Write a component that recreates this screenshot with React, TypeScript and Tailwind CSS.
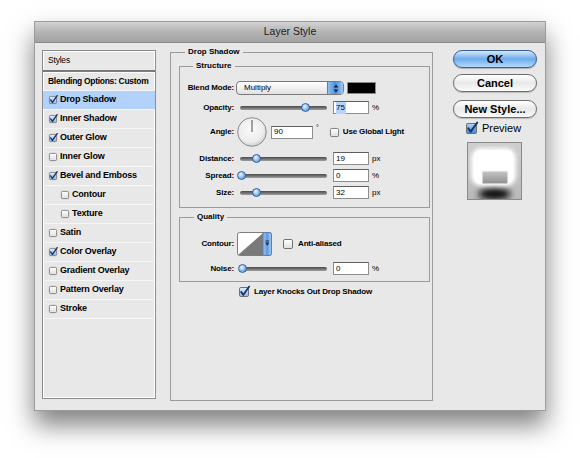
import { useId } from 'react'

const STYLES = [
  { label: 'Drop Shadow',      on: true,  active: true },
  { label: 'Inner Shadow',     on: true },
  { label: 'Outer Glow',       on: true },
  { label: 'Inner Glow',       on: false },
  { label: 'Bevel and Emboss', on: true },
  { label: 'Contour',          on: false, sub: true },
  { label: 'Texture',          on: false, sub: true },
  { label: 'Satin',            on: false },
  { label: 'Color Overlay',    on: true },
  { label: 'Gradient Overlay', on: false },
  { label: 'Pattern Overlay',  on: false },
  { label: 'Stroke',           on: false },
]

function Check({ on, size = 8, tone = 'light' }: { on: boolean; size?: number; tone?: 'light' | 'blue' }) {
  const id = 'cb' + useId().replace(/:/g, '')
  const top = on ? (tone === 'blue' ? '#b9d6f6' : '#e2edf9') : '#ffffff'
  const bottom = on ? (tone === 'blue' ? '#3f86dc' : '#93b7e2') : '#dedede'
  return (
    <svg width={size} height={size} viewBox="0 0 10 10" className="shrink-0 overflow-visible">
      <defs>
        <linearGradient id={id} x1="0" y1="0" x2="0" y2="1">
          <stop offset="0" stopColor={top} />
          <stop offset="1" stopColor={bottom} />
        </linearGradient>
      </defs>
      <rect x="0.5" y="0.5" width="9" height="9" rx="1.3" fill={`url(#${id})`} stroke="#707070" />
      {on && (
        <path d="M2.1 4.9 L4.3 7.9 L10.2 -0.4" fill="none" stroke="#15356e" strokeWidth="1.8" strokeLinecap="round" strokeLinejoin="round" />
      )}
    </svg>
  )
}

function Slider({ pos }: { pos: number }) {
  return (
    <div className="relative w-[87px] h-[10px] flex items-center shrink-0">
      <div className="w-full h-[4px] rounded-full bg-linear-to-b from-[#4a4a4a] to-[#a0a0a0]" />
      <div
        className="absolute top-[0.5px] size-[9px] rounded-full border border-[#36629f] bg-radial-[at_40%_35%] from-[#eef6ff] via-[#8dbdf0] to-[#3f7fcf]"
        style={{ left: pos - 4.5 }}
      />
    </div>
  )
}

function Field({ children, wide }: { children: React.ReactNode; wide?: boolean }) {
  return (
    <div className={`h-[13px] shrink-0 bg-white border border-[#8d8d8d] border-t-[#5f5f5f] flex items-center pl-[2px] text-[8px] ${wide ? 'w-[42px]' : 'w-[36px]'}`}>
      {children}
    </div>
  )
}

function Label({ children }: { children: React.ReactNode }) {
  return <div className="w-[54px] shrink-0 text-right font-bold tracking-[-0.15px]">{children}</div>
}

function SliderRow({ label, pos, value, unit }: { label: string; pos: number; value: string; unit: string }) {
  return (
    <div className="flex items-center h-[13px]">
      <Label>{label}</Label>
      <div className="ml-[6px]"><Slider pos={pos} /></div>
      <div className="ml-[6px]"><Field>{value}</Field></div>
      <span className="ml-[3px] text-[8px]">{unit}</span>
    </div>
  )
}

function Dial() {
  return (
    <svg width="30" height="30" viewBox="0 0 30 30" className="shrink-0">
      <defs>
        <radialGradient id="dialfill" cx="0.45" cy="0.4" r="0.6">
          <stop offset="0" stopColor="#fbfbfb" />
          <stop offset="0.75" stopColor="#ececec" />
          <stop offset="1" stopColor="#cfcfcf" />
        </radialGradient>
      </defs>
      <circle cx="15" cy="15" r="14.3" fill="url(#dialfill)" stroke="#8a8a8a" />
      <line x1="15" y1="15" x2="15" y2="3" stroke="#4a4a4a" strokeWidth="1" />
    </svg>
  )
}

function ContourSwatch() {
  return (
    <svg width="35" height="24" viewBox="0 0 35 24" className="shrink-0">
      <defs>
        <linearGradient id="contourbtn" x1="0" y1="0" x2="1" y2="0">
          <stop offset="0" stopColor="#9cc6f2" />
          <stop offset="0.5" stopColor="#5c9ae2" />
          <stop offset="1" stopColor="#a8d0f6" />
        </linearGradient>
      </defs>
      <rect x="0.5" y="0.5" width="34" height="23" rx="2" fill="#ffffff" stroke="#7d7d7d" />
      <polygon points="1,23 26,1 26,23" fill="#7a7a7a" />
      <rect x="26" y="0.5" width="8.5" height="23" rx="2" fill="url(#contourbtn)" stroke="#5a7fae" />
      <line x1="28.5" y1="9" x2="32" y2="9" stroke="#1e2c44" strokeWidth="1" />
      <polygon points="28.3,10.5 32.2,10.5 30.25,14" fill="#1e2c44" />
    </svg>
  )
}

function PreviewThumb() {
  return (
    <svg width="55" height="58" viewBox="0 0 55 58" className="block">
      <defs>
        <linearGradient id="pvbg" x1="0" y1="0" x2="0" y2="1">
          <stop offset="0" stopColor="#cfcfcf" />
          <stop offset="1" stopColor="#b9b9b9" />
        </linearGradient>
        <linearGradient id="pvinner" x1="0" y1="0" x2="0" y2="1">
          <stop offset="0" stopColor="#c6c6c6" />
          <stop offset="1" stopColor="#8e8e8e" />
        </linearGradient>
        <filter id="pvblur" x="-50%" y="-50%" width="200%" height="200%">
          <feGaussianBlur stdDeviation="3" />
        </filter>
        <filter id="pvglow" x="-50%" y="-50%" width="200%" height="200%">
          <feGaussianBlur stdDeviation="2" />
        </filter>
      </defs>
      <rect width="55" height="58" fill="url(#pvbg)" />
      <ellipse cx="27.5" cy="52" rx="16" ry="6" fill="#111" filter="url(#pvblur)" />
      <rect x="4" y="6" width="45" height="38" rx="10" fill="#ffffff" filter="url(#pvglow)" />
      <rect x="7" y="8" width="39" height="34" rx="7" fill="#ffffff" />
      <rect x="15" y="29" width="26" height="13" fill="url(#pvinner)" stroke="#f4f4f4" strokeWidth="1.2" />
      <rect x="0.5" y="0.5" width="54" height="57" fill="none" stroke="#8a8a8a" />
    </svg>
  )
}

export default function App() {
  return (
    <div className="min-h-[458px] bg-white pt-[21px] pl-[34px] text-black font-['Liberation_Sans',Arial,sans-serif]">
      <div className="w-[512px] h-[390px] bg-[#e8e8e8] border border-[#9c9c9c] shadow-[0_14px_24px_rgba(0,0,0,0.5)]">

        {/* Title bar */}
        <div className="h-[21px] bg-linear-to-b from-[#d2d2d2] via-[#b4b4b4] to-[#a2a2a2] border-b border-[#8a8a8a] flex items-center justify-center text-[10.5px] text-[#1b1b1b]">
          Layer Style
        </div>

        <div className="flex pl-[7px] pt-[4px]">

          {/* Styles list */}
          <div className="mt-[3px] w-[114px] h-[349px] shrink-0 bg-[#e8e8e8] border border-[#8c8c8c] shadow-[inset_1px_1px_0_#ffffff,inset_-1px_-1px_0_#ffffff] text-[9px] font-bold tracking-[-0.2px]">
            <div className="h-[19px] flex items-center pl-[5px] font-normal text-[8.5px]">Styles</div>
            <div className="h-[2px] bg-[#7a7a7a]" />
            <div className="h-[19px] flex items-center pl-[5px] border-t border-white border-b border-b-[#f6f6f6] text-[8.5px] tracking-[-0.3px]">
              Blending Options: Custom
            </div>
            {STYLES.map(s => (
              <div
                key={s.label}
                className={`h-[19px] flex items-center border-b border-[#f6f6f6] ${s.sub ? 'pl-[18px]' : 'pl-[6px]'} ${s.active ? 'bg-[#b3d2fb]' : ''}`}
              >
                <Check on={s.on} />
                <span className="ml-[3px]">{s.label}</span>
              </div>
            ))}
          </div>

          {/* Drop Shadow group */}
          <fieldset className="ml-[14px] w-[263px] h-[354px] shrink-0 border border-[#9b9b9b] text-[8px]">
            <legend className="ml-[14px] px-[3px] font-bold leading-[10px]">Drop Shadow</legend>

            <fieldset className="mt-[4px] ml-[8px] mr-[2px] border border-[#9b9b9b] pt-[10px] pb-[8px]">
              <legend className="ml-[13px] px-[3px] font-bold leading-[10px]">Structure</legend>

              <div className="flex items-center h-[14px]">
                <Label>Blend Mode:</Label>
                <div className="ml-[2px] w-[108px] h-[14px] rounded-[4px] border border-[#7b7b7b] bg-linear-to-b from-white to-[#e2e2e2] flex items-center overflow-hidden">
                  <span className="flex-1 pl-[7px]">Multiply</span>
                  <div className="w-[16px] h-full bg-linear-to-r from-[#8fbff0] via-[#4d8fdf] to-[#9ccaf5] border-l border-[#5a7fae] flex items-center justify-center">
                    <svg width="6" height="9" viewBox="0 0 6 9">
                      <polygon points="0.5,3.6 5.5,3.6 3,0.5" fill="#13233d" />
                      <polygon points="0.5,5.4 5.5,5.4 3,8.5" fill="#13233d" />
                    </svg>
                  </div>
                </div>
                <div className="ml-[3px] w-[29px] h-[12px] bg-black border border-[#8a8a8a]" />
              </div>

              <div className="mt-[6px] flex items-center h-[13px]">
                <Label>Opacity:</Label>
                <div className="ml-[6px]"><Slider pos={65} /></div>
                <div className="ml-[6px]">
                  <Field><span className="bg-[#b4d4fd] pr-[1px]">75</span></Field>
                </div>
                <span className="ml-[3px]">%</span>
              </div>

              <div className="mt-[3px] flex items-center h-[30px]">
                <Label>Angle:</Label>
                <div className="ml-[3px]"><Dial /></div>
                <div className="ml-[4px]"><Field wide>90</Field></div>
                <span className="ml-[3px] -mt-[7px] text-[7px]">°</span>
                <div className="ml-[11px]"><Check on={false} size={9} /></div>
                <span className="ml-[4px] font-bold tracking-[-0.15px]">Use Global Light</span>
              </div>

              <div className="mt-[5px]"><SliderRow label="Distance:" pos={16} value="19" unit="px" /></div>
              <div className="mt-[4px]"><SliderRow label="Spread:" pos={1} value="0" unit="%" /></div>
              <div className="mt-[4px]"><SliderRow label="Size:" pos={16} value="32" unit="px" /></div>
            </fieldset>

            <fieldset className="mt-[4px] ml-[8px] mr-[2px] border border-[#9b9b9b] pt-[10px] pb-[6px]">
              <legend className="ml-[14px] px-[3px] font-bold leading-[10px]">Quality</legend>

              <div className="flex items-center h-[24px]">
                <Label>Contour:</Label>
                <div className="ml-[3px]"><ContourSwatch /></div>
                <div className="ml-[11px]"><Check on={false} size={10} /></div>
                <span className="ml-[5px] font-bold tracking-[-0.15px]">Anti-aliased</span>
              </div>

              <div className="mt-[6px]"><SliderRow label="Noise:" pos={2} value="0" unit="%" /></div>
            </fieldset>

            <div className="mt-[5px] pl-[68px] flex items-center h-[10px]">
              <Check on size={10} />
              <span className="ml-[5px] font-bold tracking-[-0.15px]">Layer Knocks Out Drop Shadow</span>
            </div>
          </fieldset>

          {/* Buttons + preview */}
          <div className="ml-[20px] mt-[3px] w-[84px] shrink-0 flex flex-col">
            <button className="h-[18px] rounded-full border border-[#3b5f92] bg-linear-to-b from-[#d6eafc] via-[#6eaaea] to-[#b2dcfc] text-[11px] font-bold leading-none shadow-[0_1px_1px_rgba(0,0,0,0.25)]">
              OK
            </button>
            <button className="mt-[6px] h-[18px] rounded-full border border-[#6e6e6e] bg-linear-to-b from-white via-[#e9e9e9] to-[#fbfbfb] text-[11px] font-bold leading-none shadow-[0_1px_1px_rgba(0,0,0,0.2)]">
              Cancel
            </button>
            <button className="mt-[8px] h-[18px] rounded-full border border-[#6e6e6e] bg-linear-to-b from-white via-[#e9e9e9] to-[#fbfbfb] text-[11px] font-bold leading-none shadow-[0_1px_1px_rgba(0,0,0,0.2)]">
              New Style...
            </button>
            <div className="mt-[5px] flex items-center h-[11px] pl-[13px]">
              <Check on size={11} tone="blue" />
              <span className="ml-[5px] text-[11px]">Preview</span>
            </div>
            <div className="mt-[8px] ml-[14px]">
              <PreviewThumb />
            </div>
          </div>
        </div>
      </div>
    </div>
  )
}
